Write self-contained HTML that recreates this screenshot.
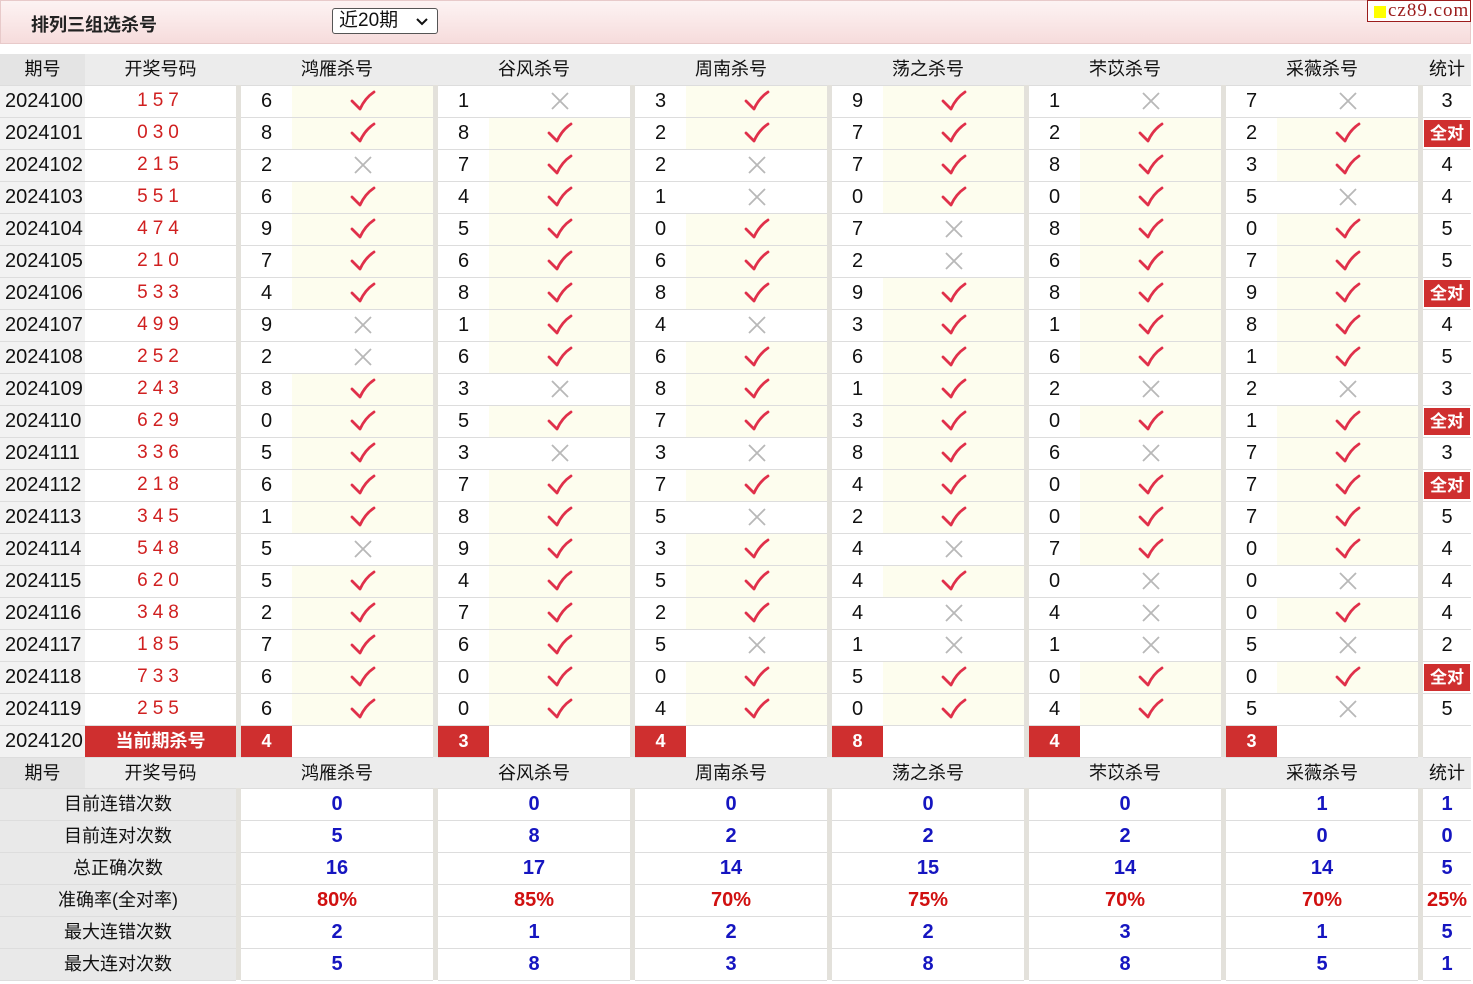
<!DOCTYPE html>
<html><head><meta charset="utf-8">
<style>
*{margin:0;padding:0;box-sizing:border-box}
body{width:1473px;height:984px;background:#fff;font-family:"Liberation Sans","Noto Sans CJK SC",sans-serif;color:#111;overflow:hidden;position:relative}
.top{position:absolute;left:0;top:0;width:1471px;height:44px;background:linear-gradient(#fdf3f3,#f6dcdc);border:1px solid #e8caca}
.title{position:absolute;left:30px;top:10px;font-size:18px;font-weight:bold;color:#222}
.sel{position:absolute;left:331px;top:7px;width:106px;height:26px;border:1px solid #555;border-radius:3px;background:#fff;font-size:19px;padding-left:6px;line-height:24px}
.sel svg{position:absolute;right:8px;top:8px}
.logo{position:absolute;left:1367px;top:0;width:104px;height:22px;border:1px solid #9b1c1c;background:#fff;font-family:"Liberation Serif",serif;font-size:19px;color:#9b1c1c;line-height:20px;padding-left:20px;letter-spacing:1px}
.logo i{position:absolute;left:6px;top:5px;width:12px;height:12px;background:#ff0}
table{position:absolute;left:0;top:54px;border-collapse:collapse;table-layout:fixed;width:1471px}
tr{height:32px}
td{height:32px;max-height:32px;line-height:20px;border-bottom:1px solid #ddd;text-align:center;font-size:20px;padding:0;white-space:nowrap;overflow:hidden}
tr.h{height:31px}
tr.h td{background:#ececec;font-size:18px;height:31px}
tr.h td.q{background:#e4e4e4}
td.s{background:#e3e1db;border-bottom:none}
td.p{background:#f2f2f2;text-align:left;padding-left:5px}
td.d{color:#d02020;letter-spacing:5px;font-size:19px}
td.ok{background:#fdfdee}
td svg.i{display:block;margin:0 auto}
td.r{background:#cf2f2f;color:#fff;font-weight:bold;font-size:18px}
td.all{background:#fff;padding:2px 1px}
td.all span{display:block;background:#cf2f2f;color:#fff;font-weight:bold;font-size:17px;height:27px;line-height:27px}
td.lb{background:#e9e9e9;font-size:18px}
td.v{color:#1515c0;font-weight:bold}
td.pc{color:#d01010;font-weight:bold}
</style></head><body>
<svg width="0" height="0" style="position:absolute"><defs>
<symbol id="c" viewBox="0 0 26 22"><path d="M2 11 L10 19 Q15 8 24 2" fill="none" stroke="#e0304a" stroke-width="2.8" stroke-linecap="round" stroke-linejoin="round"/></symbol>
<symbol id="x" viewBox="0 0 20 20"><path d="M2 2L18 18M18 2L2 18" stroke="#b8b8b8" stroke-width="1.8"/></symbol>
</defs></svg>
<div class="top"><div class="title">排列三组选杀号</div>
<div class="sel">近20期<svg width="14" height="9" viewBox="0 0 14 9"><path d="M2 2L7 7L12 2" fill="none" stroke="#111" stroke-width="2"/></svg></div></div>
<div class="logo"><i></i>cz89.com</div>
<table>
<colgroup><col style="width:85px"><col style="width:151px"><col style="width:5px"><col style="width:51px"><col style="width:141px"><col style="width:5px"><col style="width:51px"><col style="width:141px"><col style="width:5px"><col style="width:51px"><col style="width:141px"><col style="width:5px"><col style="width:51px"><col style="width:141px"><col style="width:5px"><col style="width:51px"><col style="width:141px"><col style="width:5px"><col style="width:51px"><col style="width:141px"><col style="width:5px"><col style="width:48px"></colgroup>
<tr class="h"><td class="q">期号</td><td>开奖号码</td><td class="s"></td><td colspan="2">鸿雁杀号</td><td class="s"></td><td colspan="2">谷风杀号</td><td class="s"></td><td colspan="2">周南杀号</td><td class="s"></td><td colspan="2">荡之杀号</td><td class="s"></td><td colspan="2">芣苡杀号</td><td class="s"></td><td colspan="2">采薇杀号</td><td class="s"></td><td>统计</td></tr>
<tr><td class="p">2024100</td><td class="d">157</td><td class="s"></td><td>6</td><td class="ok"><svg class="i" width="26" height="22"><use href="#c"/></svg></td><td class="s"></td><td>1</td><td><svg class="i" width="20" height="20"><use href="#x"/></svg></td><td class="s"></td><td>3</td><td class="ok"><svg class="i" width="26" height="22"><use href="#c"/></svg></td><td class="s"></td><td>9</td><td class="ok"><svg class="i" width="26" height="22"><use href="#c"/></svg></td><td class="s"></td><td>1</td><td><svg class="i" width="20" height="20"><use href="#x"/></svg></td><td class="s"></td><td>7</td><td><svg class="i" width="20" height="20"><use href="#x"/></svg></td><td class="s"></td><td>3</td></tr>
<tr><td class="p">2024101</td><td class="d">030</td><td class="s"></td><td>8</td><td class="ok"><svg class="i" width="26" height="22"><use href="#c"/></svg></td><td class="s"></td><td>8</td><td class="ok"><svg class="i" width="26" height="22"><use href="#c"/></svg></td><td class="s"></td><td>2</td><td class="ok"><svg class="i" width="26" height="22"><use href="#c"/></svg></td><td class="s"></td><td>7</td><td class="ok"><svg class="i" width="26" height="22"><use href="#c"/></svg></td><td class="s"></td><td>2</td><td class="ok"><svg class="i" width="26" height="22"><use href="#c"/></svg></td><td class="s"></td><td>2</td><td class="ok"><svg class="i" width="26" height="22"><use href="#c"/></svg></td><td class="s"></td><td class="all"><span>全对</span></td></tr>
<tr><td class="p">2024102</td><td class="d">215</td><td class="s"></td><td>2</td><td><svg class="i" width="20" height="20"><use href="#x"/></svg></td><td class="s"></td><td>7</td><td class="ok"><svg class="i" width="26" height="22"><use href="#c"/></svg></td><td class="s"></td><td>2</td><td><svg class="i" width="20" height="20"><use href="#x"/></svg></td><td class="s"></td><td>7</td><td class="ok"><svg class="i" width="26" height="22"><use href="#c"/></svg></td><td class="s"></td><td>8</td><td class="ok"><svg class="i" width="26" height="22"><use href="#c"/></svg></td><td class="s"></td><td>3</td><td class="ok"><svg class="i" width="26" height="22"><use href="#c"/></svg></td><td class="s"></td><td>4</td></tr>
<tr><td class="p">2024103</td><td class="d">551</td><td class="s"></td><td>6</td><td class="ok"><svg class="i" width="26" height="22"><use href="#c"/></svg></td><td class="s"></td><td>4</td><td class="ok"><svg class="i" width="26" height="22"><use href="#c"/></svg></td><td class="s"></td><td>1</td><td><svg class="i" width="20" height="20"><use href="#x"/></svg></td><td class="s"></td><td>0</td><td class="ok"><svg class="i" width="26" height="22"><use href="#c"/></svg></td><td class="s"></td><td>0</td><td class="ok"><svg class="i" width="26" height="22"><use href="#c"/></svg></td><td class="s"></td><td>5</td><td><svg class="i" width="20" height="20"><use href="#x"/></svg></td><td class="s"></td><td>4</td></tr>
<tr><td class="p">2024104</td><td class="d">474</td><td class="s"></td><td>9</td><td class="ok"><svg class="i" width="26" height="22"><use href="#c"/></svg></td><td class="s"></td><td>5</td><td class="ok"><svg class="i" width="26" height="22"><use href="#c"/></svg></td><td class="s"></td><td>0</td><td class="ok"><svg class="i" width="26" height="22"><use href="#c"/></svg></td><td class="s"></td><td>7</td><td><svg class="i" width="20" height="20"><use href="#x"/></svg></td><td class="s"></td><td>8</td><td class="ok"><svg class="i" width="26" height="22"><use href="#c"/></svg></td><td class="s"></td><td>0</td><td class="ok"><svg class="i" width="26" height="22"><use href="#c"/></svg></td><td class="s"></td><td>5</td></tr>
<tr><td class="p">2024105</td><td class="d">210</td><td class="s"></td><td>7</td><td class="ok"><svg class="i" width="26" height="22"><use href="#c"/></svg></td><td class="s"></td><td>6</td><td class="ok"><svg class="i" width="26" height="22"><use href="#c"/></svg></td><td class="s"></td><td>6</td><td class="ok"><svg class="i" width="26" height="22"><use href="#c"/></svg></td><td class="s"></td><td>2</td><td><svg class="i" width="20" height="20"><use href="#x"/></svg></td><td class="s"></td><td>6</td><td class="ok"><svg class="i" width="26" height="22"><use href="#c"/></svg></td><td class="s"></td><td>7</td><td class="ok"><svg class="i" width="26" height="22"><use href="#c"/></svg></td><td class="s"></td><td>5</td></tr>
<tr><td class="p">2024106</td><td class="d">533</td><td class="s"></td><td>4</td><td class="ok"><svg class="i" width="26" height="22"><use href="#c"/></svg></td><td class="s"></td><td>8</td><td class="ok"><svg class="i" width="26" height="22"><use href="#c"/></svg></td><td class="s"></td><td>8</td><td class="ok"><svg class="i" width="26" height="22"><use href="#c"/></svg></td><td class="s"></td><td>9</td><td class="ok"><svg class="i" width="26" height="22"><use href="#c"/></svg></td><td class="s"></td><td>8</td><td class="ok"><svg class="i" width="26" height="22"><use href="#c"/></svg></td><td class="s"></td><td>9</td><td class="ok"><svg class="i" width="26" height="22"><use href="#c"/></svg></td><td class="s"></td><td class="all"><span>全对</span></td></tr>
<tr><td class="p">2024107</td><td class="d">499</td><td class="s"></td><td>9</td><td><svg class="i" width="20" height="20"><use href="#x"/></svg></td><td class="s"></td><td>1</td><td class="ok"><svg class="i" width="26" height="22"><use href="#c"/></svg></td><td class="s"></td><td>4</td><td><svg class="i" width="20" height="20"><use href="#x"/></svg></td><td class="s"></td><td>3</td><td class="ok"><svg class="i" width="26" height="22"><use href="#c"/></svg></td><td class="s"></td><td>1</td><td class="ok"><svg class="i" width="26" height="22"><use href="#c"/></svg></td><td class="s"></td><td>8</td><td class="ok"><svg class="i" width="26" height="22"><use href="#c"/></svg></td><td class="s"></td><td>4</td></tr>
<tr><td class="p">2024108</td><td class="d">252</td><td class="s"></td><td>2</td><td><svg class="i" width="20" height="20"><use href="#x"/></svg></td><td class="s"></td><td>6</td><td class="ok"><svg class="i" width="26" height="22"><use href="#c"/></svg></td><td class="s"></td><td>6</td><td class="ok"><svg class="i" width="26" height="22"><use href="#c"/></svg></td><td class="s"></td><td>6</td><td class="ok"><svg class="i" width="26" height="22"><use href="#c"/></svg></td><td class="s"></td><td>6</td><td class="ok"><svg class="i" width="26" height="22"><use href="#c"/></svg></td><td class="s"></td><td>1</td><td class="ok"><svg class="i" width="26" height="22"><use href="#c"/></svg></td><td class="s"></td><td>5</td></tr>
<tr><td class="p">2024109</td><td class="d">243</td><td class="s"></td><td>8</td><td class="ok"><svg class="i" width="26" height="22"><use href="#c"/></svg></td><td class="s"></td><td>3</td><td><svg class="i" width="20" height="20"><use href="#x"/></svg></td><td class="s"></td><td>8</td><td class="ok"><svg class="i" width="26" height="22"><use href="#c"/></svg></td><td class="s"></td><td>1</td><td class="ok"><svg class="i" width="26" height="22"><use href="#c"/></svg></td><td class="s"></td><td>2</td><td><svg class="i" width="20" height="20"><use href="#x"/></svg></td><td class="s"></td><td>2</td><td><svg class="i" width="20" height="20"><use href="#x"/></svg></td><td class="s"></td><td>3</td></tr>
<tr><td class="p">2024110</td><td class="d">629</td><td class="s"></td><td>0</td><td class="ok"><svg class="i" width="26" height="22"><use href="#c"/></svg></td><td class="s"></td><td>5</td><td class="ok"><svg class="i" width="26" height="22"><use href="#c"/></svg></td><td class="s"></td><td>7</td><td class="ok"><svg class="i" width="26" height="22"><use href="#c"/></svg></td><td class="s"></td><td>3</td><td class="ok"><svg class="i" width="26" height="22"><use href="#c"/></svg></td><td class="s"></td><td>0</td><td class="ok"><svg class="i" width="26" height="22"><use href="#c"/></svg></td><td class="s"></td><td>1</td><td class="ok"><svg class="i" width="26" height="22"><use href="#c"/></svg></td><td class="s"></td><td class="all"><span>全对</span></td></tr>
<tr><td class="p">2024111</td><td class="d">336</td><td class="s"></td><td>5</td><td class="ok"><svg class="i" width="26" height="22"><use href="#c"/></svg></td><td class="s"></td><td>3</td><td><svg class="i" width="20" height="20"><use href="#x"/></svg></td><td class="s"></td><td>3</td><td><svg class="i" width="20" height="20"><use href="#x"/></svg></td><td class="s"></td><td>8</td><td class="ok"><svg class="i" width="26" height="22"><use href="#c"/></svg></td><td class="s"></td><td>6</td><td><svg class="i" width="20" height="20"><use href="#x"/></svg></td><td class="s"></td><td>7</td><td class="ok"><svg class="i" width="26" height="22"><use href="#c"/></svg></td><td class="s"></td><td>3</td></tr>
<tr><td class="p">2024112</td><td class="d">218</td><td class="s"></td><td>6</td><td class="ok"><svg class="i" width="26" height="22"><use href="#c"/></svg></td><td class="s"></td><td>7</td><td class="ok"><svg class="i" width="26" height="22"><use href="#c"/></svg></td><td class="s"></td><td>7</td><td class="ok"><svg class="i" width="26" height="22"><use href="#c"/></svg></td><td class="s"></td><td>4</td><td class="ok"><svg class="i" width="26" height="22"><use href="#c"/></svg></td><td class="s"></td><td>0</td><td class="ok"><svg class="i" width="26" height="22"><use href="#c"/></svg></td><td class="s"></td><td>7</td><td class="ok"><svg class="i" width="26" height="22"><use href="#c"/></svg></td><td class="s"></td><td class="all"><span>全对</span></td></tr>
<tr><td class="p">2024113</td><td class="d">345</td><td class="s"></td><td>1</td><td class="ok"><svg class="i" width="26" height="22"><use href="#c"/></svg></td><td class="s"></td><td>8</td><td class="ok"><svg class="i" width="26" height="22"><use href="#c"/></svg></td><td class="s"></td><td>5</td><td><svg class="i" width="20" height="20"><use href="#x"/></svg></td><td class="s"></td><td>2</td><td class="ok"><svg class="i" width="26" height="22"><use href="#c"/></svg></td><td class="s"></td><td>0</td><td class="ok"><svg class="i" width="26" height="22"><use href="#c"/></svg></td><td class="s"></td><td>7</td><td class="ok"><svg class="i" width="26" height="22"><use href="#c"/></svg></td><td class="s"></td><td>5</td></tr>
<tr><td class="p">2024114</td><td class="d">548</td><td class="s"></td><td>5</td><td><svg class="i" width="20" height="20"><use href="#x"/></svg></td><td class="s"></td><td>9</td><td class="ok"><svg class="i" width="26" height="22"><use href="#c"/></svg></td><td class="s"></td><td>3</td><td class="ok"><svg class="i" width="26" height="22"><use href="#c"/></svg></td><td class="s"></td><td>4</td><td><svg class="i" width="20" height="20"><use href="#x"/></svg></td><td class="s"></td><td>7</td><td class="ok"><svg class="i" width="26" height="22"><use href="#c"/></svg></td><td class="s"></td><td>0</td><td class="ok"><svg class="i" width="26" height="22"><use href="#c"/></svg></td><td class="s"></td><td>4</td></tr>
<tr><td class="p">2024115</td><td class="d">620</td><td class="s"></td><td>5</td><td class="ok"><svg class="i" width="26" height="22"><use href="#c"/></svg></td><td class="s"></td><td>4</td><td class="ok"><svg class="i" width="26" height="22"><use href="#c"/></svg></td><td class="s"></td><td>5</td><td class="ok"><svg class="i" width="26" height="22"><use href="#c"/></svg></td><td class="s"></td><td>4</td><td class="ok"><svg class="i" width="26" height="22"><use href="#c"/></svg></td><td class="s"></td><td>0</td><td><svg class="i" width="20" height="20"><use href="#x"/></svg></td><td class="s"></td><td>0</td><td><svg class="i" width="20" height="20"><use href="#x"/></svg></td><td class="s"></td><td>4</td></tr>
<tr><td class="p">2024116</td><td class="d">348</td><td class="s"></td><td>2</td><td class="ok"><svg class="i" width="26" height="22"><use href="#c"/></svg></td><td class="s"></td><td>7</td><td class="ok"><svg class="i" width="26" height="22"><use href="#c"/></svg></td><td class="s"></td><td>2</td><td class="ok"><svg class="i" width="26" height="22"><use href="#c"/></svg></td><td class="s"></td><td>4</td><td><svg class="i" width="20" height="20"><use href="#x"/></svg></td><td class="s"></td><td>4</td><td><svg class="i" width="20" height="20"><use href="#x"/></svg></td><td class="s"></td><td>0</td><td class="ok"><svg class="i" width="26" height="22"><use href="#c"/></svg></td><td class="s"></td><td>4</td></tr>
<tr><td class="p">2024117</td><td class="d">185</td><td class="s"></td><td>7</td><td class="ok"><svg class="i" width="26" height="22"><use href="#c"/></svg></td><td class="s"></td><td>6</td><td class="ok"><svg class="i" width="26" height="22"><use href="#c"/></svg></td><td class="s"></td><td>5</td><td><svg class="i" width="20" height="20"><use href="#x"/></svg></td><td class="s"></td><td>1</td><td><svg class="i" width="20" height="20"><use href="#x"/></svg></td><td class="s"></td><td>1</td><td><svg class="i" width="20" height="20"><use href="#x"/></svg></td><td class="s"></td><td>5</td><td><svg class="i" width="20" height="20"><use href="#x"/></svg></td><td class="s"></td><td>2</td></tr>
<tr><td class="p">2024118</td><td class="d">733</td><td class="s"></td><td>6</td><td class="ok"><svg class="i" width="26" height="22"><use href="#c"/></svg></td><td class="s"></td><td>0</td><td class="ok"><svg class="i" width="26" height="22"><use href="#c"/></svg></td><td class="s"></td><td>0</td><td class="ok"><svg class="i" width="26" height="22"><use href="#c"/></svg></td><td class="s"></td><td>5</td><td class="ok"><svg class="i" width="26" height="22"><use href="#c"/></svg></td><td class="s"></td><td>0</td><td class="ok"><svg class="i" width="26" height="22"><use href="#c"/></svg></td><td class="s"></td><td>0</td><td class="ok"><svg class="i" width="26" height="22"><use href="#c"/></svg></td><td class="s"></td><td class="all"><span>全对</span></td></tr>
<tr><td class="p">2024119</td><td class="d">255</td><td class="s"></td><td>6</td><td class="ok"><svg class="i" width="26" height="22"><use href="#c"/></svg></td><td class="s"></td><td>0</td><td class="ok"><svg class="i" width="26" height="22"><use href="#c"/></svg></td><td class="s"></td><td>4</td><td class="ok"><svg class="i" width="26" height="22"><use href="#c"/></svg></td><td class="s"></td><td>0</td><td class="ok"><svg class="i" width="26" height="22"><use href="#c"/></svg></td><td class="s"></td><td>4</td><td class="ok"><svg class="i" width="26" height="22"><use href="#c"/></svg></td><td class="s"></td><td>5</td><td><svg class="i" width="20" height="20"><use href="#x"/></svg></td><td class="s"></td><td>5</td></tr>
<tr><td class="p">2024120</td><td class="r">当前期杀号</td><td class="s"></td><td class="r">4</td><td></td><td class="s"></td><td class="r">3</td><td></td><td class="s"></td><td class="r">4</td><td></td><td class="s"></td><td class="r">8</td><td></td><td class="s"></td><td class="r">4</td><td></td><td class="s"></td><td class="r">3</td><td></td><td class="s"></td><td></td></tr>
<tr class="h"><td class="q">期号</td><td>开奖号码</td><td class="s"></td><td colspan="2">鸿雁杀号</td><td class="s"></td><td colspan="2">谷风杀号</td><td class="s"></td><td colspan="2">周南杀号</td><td class="s"></td><td colspan="2">荡之杀号</td><td class="s"></td><td colspan="2">芣苡杀号</td><td class="s"></td><td colspan="2">采薇杀号</td><td class="s"></td><td>统计</td></tr>
<tr><td class="lb" colspan="2">目前连错次数</td><td class="s"></td><td class="v" colspan="2">0</td><td class="s"></td><td class="v" colspan="2">0</td><td class="s"></td><td class="v" colspan="2">0</td><td class="s"></td><td class="v" colspan="2">0</td><td class="s"></td><td class="v" colspan="2">0</td><td class="s"></td><td class="v" colspan="2">1</td><td class="s"></td><td class="v">1</td></tr>
<tr><td class="lb" colspan="2">目前连对次数</td><td class="s"></td><td class="v" colspan="2">5</td><td class="s"></td><td class="v" colspan="2">8</td><td class="s"></td><td class="v" colspan="2">2</td><td class="s"></td><td class="v" colspan="2">2</td><td class="s"></td><td class="v" colspan="2">2</td><td class="s"></td><td class="v" colspan="2">0</td><td class="s"></td><td class="v">0</td></tr>
<tr><td class="lb" colspan="2">总正确次数</td><td class="s"></td><td class="v" colspan="2">16</td><td class="s"></td><td class="v" colspan="2">17</td><td class="s"></td><td class="v" colspan="2">14</td><td class="s"></td><td class="v" colspan="2">15</td><td class="s"></td><td class="v" colspan="2">14</td><td class="s"></td><td class="v" colspan="2">14</td><td class="s"></td><td class="v">5</td></tr>
<tr><td class="lb" colspan="2">准确率(全对率)</td><td class="s"></td><td class="pc" colspan="2">80%</td><td class="s"></td><td class="pc" colspan="2">85%</td><td class="s"></td><td class="pc" colspan="2">70%</td><td class="s"></td><td class="pc" colspan="2">75%</td><td class="s"></td><td class="pc" colspan="2">70%</td><td class="s"></td><td class="pc" colspan="2">70%</td><td class="s"></td><td class="pc">25%</td></tr>
<tr><td class="lb" colspan="2">最大连错次数</td><td class="s"></td><td class="v" colspan="2">2</td><td class="s"></td><td class="v" colspan="2">1</td><td class="s"></td><td class="v" colspan="2">2</td><td class="s"></td><td class="v" colspan="2">2</td><td class="s"></td><td class="v" colspan="2">3</td><td class="s"></td><td class="v" colspan="2">1</td><td class="s"></td><td class="v">5</td></tr>
<tr><td class="lb" colspan="2">最大连对次数</td><td class="s"></td><td class="v" colspan="2">5</td><td class="s"></td><td class="v" colspan="2">8</td><td class="s"></td><td class="v" colspan="2">3</td><td class="s"></td><td class="v" colspan="2">8</td><td class="s"></td><td class="v" colspan="2">8</td><td class="s"></td><td class="v" colspan="2">5</td><td class="s"></td><td class="v">1</td></tr>
</table>
</body></html>
